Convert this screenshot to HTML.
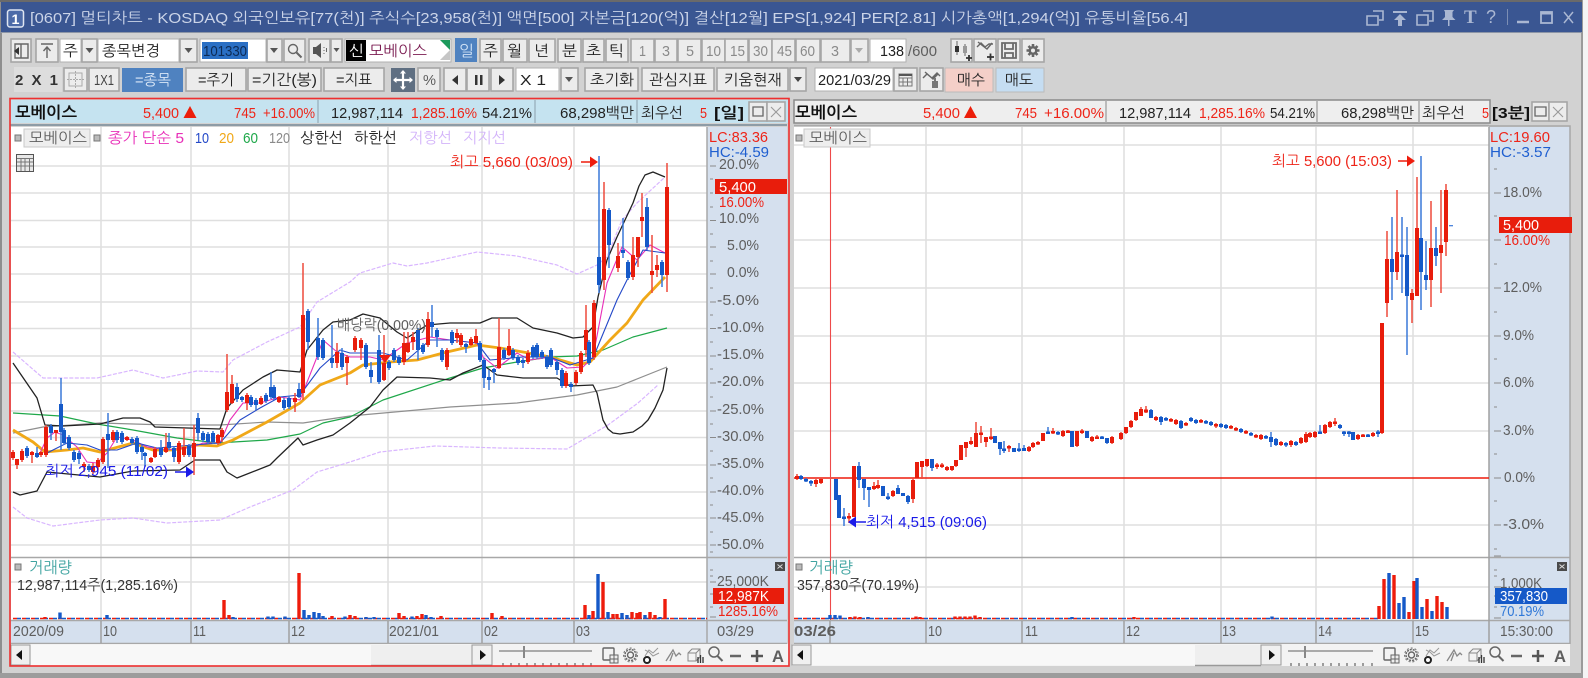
<!DOCTYPE html>
<html lang="ko"><head><meta charset="utf-8"><title>멀티차트</title>
<style>
html,body{margin:0;padding:0;width:1588px;height:678px;overflow:hidden;background:#fff}
svg{display:block;filter:blur(.35px)}
text{font-family:"Liberation Sans","NanumGothic","Noto Sans CJK KR",sans-serif;font-size:15px;fill:#222}
.h{font-weight:700}
.r{fill:#ee2418}.u{fill:#1f5fd0}.g{fill:#5e5e5e}.w{fill:#fff}.q{fill:#8a8a8a}
.b{fill:#ececec;stroke:#a6a6a6;stroke-width:1.6}
.wb{fill:#fff;stroke:#b0b0b0;stroke-width:1}
.gr{stroke:#dfdfdf;stroke-width:1.6;fill:none}
.ln{fill:none;stroke-linejoin:round}
.rw{stroke:#ee4a3c;stroke-width:1.5;fill:none}
.rb{stroke:#e81d0c;stroke-width:4;fill:none}
.bw{stroke:#3a78d8;stroke-width:1.5;fill:none}
.bb{stroke:#1559c8;stroke-width:4;fill:none}
.vr{stroke:#ee1c0c;stroke-width:3.4;fill:none}
.vb{stroke:#1559c8;stroke-width:3.4;fill:none}
.ic{fill:none;stroke:#666;stroke-width:1.4}
.ti{fill:none;stroke:#aab7d2;stroke-width:1.6}
</style></head><body>
<svg width="1588" height="678" viewBox="0 0 1588 678" xmlns="http://www.w3.org/2000/svg">
<rect width="1588" height="678" fill="#d2d2d2"/>
<rect x="1582" y="0" width="6" height="678" fill="#f4f4f4"/>
<rect x="1581" y="0" width="2" height="673" fill="#9a9a9a"/>
<rect x="0" y="0" width="2" height="678" fill="#8e8e8e"/>
<rect x="0" y="673" width="1583" height="5" fill="#9c9c9c"/>
<!-- title -->
<rect x="0" y="0" width="1582" height="2" fill="#6a6a6a"/>
<rect x="1" y="2" width="1581" height="30" fill="#3a5692"/>
<rect x="0" y="32" width="1582" height="1" fill="#8c95a6"/>
<rect x="7.5" y="10" width="16" height="17" rx="2.5" fill="#4d6ba8" stroke="#dfe6f2" stroke-width="1.5"/>
<text x="11.5" y="24" class="h w" textLength="8" lengthAdjust="spacingAndGlyphs" style="font-size:14px">1</text>
<text x="30" y="23" style="fill:#cbd4e8" textLength="1158" lengthAdjust="spacingAndGlyphs">[0607] 멀티차트 - KOSDAQ 외국인보유[77(천)] 주식수[23,958(천)] 액면[500] 자본금[120(억)] 결산[12월] EPS[1,924] PER[2.81] 시가총액[1,294(억)] 유통비율[56.4]</text>
<path class="ti" d="M1373 11h10v9h-4M1367 16h11v9h-11z"/>
<path d="M1393 11h14v2h-14zM1400 14l6 6h-4v6h-4v-6h-4z" fill="#aab7d2"/>
<path class="ti" d="M1423 11h10v10h-4M1417 15h11v10h-11z"/>
<path d="M1444 10h10l-1.500 2v5l3 3h-6v6h-1.500v-6h-6l3-3v-5z" fill="#aab7d2"/>
<text x="1464" y="23" style="fill:#aab7d2;font-family:'Liberation Serif';font-size:19px;font-weight:700">T</text>
<text x="1486" y="23" style="fill:#aab7d2;font-size:18px">?</text>
<path d="M1507.500 9v16" stroke="#7c8eb4" stroke-width="1"/>
<path d="M1517 22h12" stroke="#aab7d2" stroke-width="2.500"/>
<rect x="1541" y="12" width="11" height="11" fill="none" stroke="#aab7d2" stroke-width="1.800"/><path d="M1541 13h11" stroke="#aab7d2" stroke-width="3"/>
<path d="M1564 12l9 11M1573 12l-9 11" stroke="#aab7d2" stroke-width="1.500"/>

<!-- toolbar row1 -->
<rect class="b" x="11" y="39" width="20" height="23"/>
<path class="ic" d="M15 44h13v14h-13zM21 44v14" stroke="#444"/><path d="M14 51l5-4v8z" fill="#333"/>
<rect class="b" x="36" y="39" width="22" height="23"/>
<path class="ic" d="M41 44h12M47 47v11M43.500 51l3.500-4 3.500 4"/>
<rect class="wb" x="60" y="39" width="21" height="23"/><text x="63" y="56" textLength="15" lengthAdjust="spacingAndGlyphs">주</text>
<rect class="b" x="82" y="39" width="15" height="23"/><path d="M85.500 48h8l-4 5z" fill="#555"/>
<rect class="wb" x="98" y="39" width="81" height="23"/><text x="102" y="56" textLength="58" lengthAdjust="spacingAndGlyphs">종목변경</text>
<rect class="b" x="180" y="39" width="17" height="23"/><path d="M184.500 48h8l-4 5z" fill="#555"/>
<rect class="wb" x="200" y="39" width="66" height="23"/><rect x="202" y="42" width="46" height="17" fill="#2a6fc4"/>
<text x="203" y="56" class="w" textLength="44" lengthAdjust="spacingAndGlyphs" style="fill:#0d2b55">101330</text>
<rect class="b" x="267" y="39" width="15" height="23"/><path d="M270 48h8l-4 5z" fill="#555"/>
<rect class="b" x="284" y="39" width="21" height="23"/><circle cx="293" cy="49" r="4.500" class="ic" stroke-width="1.500"/><path d="M296.500 52.500l5 5" stroke="#666" stroke-width="2"/>
<rect class="b" x="309" y="39" width="21" height="23"/><path d="M313 47h3l5-4v15l-5-4h-3z" fill="#555"/><path d="M324 47v1M324 50v1M324 53v1M326.500 48v4" stroke="#666"/>
<rect class="b" x="331" y="39" width="11" height="23"/><path d="M333.500 48h6l-3 4z" fill="#555"/>
<rect class="wb" x="345" y="39" width="106" height="23"/>
<rect x="346" y="40" width="20" height="21" fill="#000"/><text x="349" y="56" class="w" textLength="15" lengthAdjust="spacingAndGlyphs">신</text>
<text x="369" y="56" style="fill:#7a1a50" textLength="58" lengthAdjust="spacingAndGlyphs">모베이스</text>
<path d="M440 40h10v10z" fill="#1d9a5c"/><path d="M450 50v10h-10z" fill="#c6c6c6"/>
<rect x="455" y="38" width="22" height="24" fill="#4f82c0"/><text x="459" y="56" style="fill:#cfe1f5" textLength="15" lengthAdjust="spacingAndGlyphs">일</text>
<g>
<rect class="b" x="480" y="39" width="21" height="23"/><text x="483" y="56" textLength="15" lengthAdjust="spacingAndGlyphs">주</text>
<rect class="b" x="503" y="39" width="24" height="23"/><text x="507" y="56" textLength="15" lengthAdjust="spacingAndGlyphs">월</text>
<rect class="b" x="529" y="39" width="26" height="23"/><text x="534" y="56" textLength="15" lengthAdjust="spacingAndGlyphs">년</text>
<rect class="b" x="558" y="39" width="23" height="23"/><text x="562" y="56" textLength="15" lengthAdjust="spacingAndGlyphs">분</text>
<rect class="b" x="583" y="39" width="21" height="23"/><text x="586" y="56" textLength="15" lengthAdjust="spacingAndGlyphs">초</text>
<rect class="b" x="606" y="39" width="22" height="23"/><text x="609" y="56" textLength="15" lengthAdjust="spacingAndGlyphs">틱</text>
<rect class="b" x="631" y="39" width="23" height="23"/><text x="639" y="56" class="q" textLength="7" lengthAdjust="spacingAndGlyphs">1</text>
<rect class="b" x="655" y="39" width="22" height="23"/><text x="662" y="56" class="q" textLength="8" lengthAdjust="spacingAndGlyphs">3</text>
<rect class="b" x="678" y="39" width="23" height="23"/><text x="686" y="56" class="q" textLength="8" lengthAdjust="spacingAndGlyphs">5</text>
<rect class="b" x="702" y="39" width="23" height="23"/><text x="706" y="56" class="q" textLength="15" lengthAdjust="spacingAndGlyphs">10</text>
<rect class="b" x="725" y="39" width="23" height="23"/><text x="730" y="56" class="q" textLength="15" lengthAdjust="spacingAndGlyphs">15</text>
<rect class="b" x="749" y="39" width="23" height="23"/><text x="753" y="56" class="q" textLength="15" lengthAdjust="spacingAndGlyphs">30</text>
<rect class="b" x="772" y="39" width="23" height="23"/><text x="777" y="56" class="q" textLength="15" lengthAdjust="spacingAndGlyphs">45</text>
<rect class="b" x="796" y="39" width="24" height="23"/><text x="800" y="56" class="q" textLength="15" lengthAdjust="spacingAndGlyphs">60</text>
<rect class="b" x="821" y="39" width="29" height="23"/><text x="831" y="56" class="q" textLength="8" lengthAdjust="spacingAndGlyphs">3</text>
<rect class="b" x="851" y="39" width="17" height="23"/><path d="M855 48h8l-4 5z" fill="#aaa"/>
<rect class="wb" x="870" y="39" width="36" height="23"/><text x="880" y="56" textLength="24" lengthAdjust="spacingAndGlyphs">138</text>
<text x="908" y="56" class="g" textLength="29" lengthAdjust="spacingAndGlyphs">/600</text>
</g>
<rect class="b" x="951" y="39" width="21" height="23"/><path d="M957 41v14M965 44v12" stroke="#666" stroke-width="1"/><path d="M955 46h4v6h-4z" fill="#333"/><path d="M963 46h4v7h-4z" fill="#999"/><path d="M966 58h6M969 55v6" stroke="#333" stroke-width="1.800"/>
<rect class="b" x="974" y="39" width="22" height="23"/><path d="M977 47l4-4 4 4 4-3 4 0M978 42l5 4 4 3 5-6" class="ic" stroke-width="1"/><path d="M987 57h7M990.500 53.500v7" stroke="#333" stroke-width="1.800"/>
<rect class="b" x="998" y="39" width="22" height="23"/><path d="M1002 43h14v15h-14zM1005 43v6h8v-6M1005 58v-5h8v5" fill="none" stroke="#6a6a6a" stroke-width="1.800"/>
<rect class="b" x="1022" y="39" width="22" height="23"/><circle cx="1033" cy="50.500" r="4.500" fill="#666"/><path d="M1033 44v13M1026.500 50.500h13M1028.500 46l9 9M1037.500 46l-9 9" stroke="#666" stroke-width="2.600"/><circle cx="1033" cy="50.500" r="2" fill="#ececec"/>

<!-- toolbar row2 -->
<rect x="14" y="67" width="48" height="25" fill="#dddddd"/>
<text x="15" y="85" class="h" style="fill:#333" textLength="43">2 X 1</text>
<rect class="b" x="64" y="68" width="23" height="23"/><rect x="69" y="73" width="13" height="13" fill="none" stroke="#aaa"/><path d="M75.500 71v18M67 79.500h17" stroke="#aaa" stroke-dasharray="2 1"/>
<rect class="b" x="89" y="68" width="30" height="23"/><text x="94" y="85" class="g" style="fill:#444" textLength="20" lengthAdjust="spacingAndGlyphs">1X1</text>
<rect x="122" y="68" width="61" height="24" fill="#4f82c0"/><text x="135" y="85" style="fill:#d9e7f7" textLength="36" lengthAdjust="spacingAndGlyphs">=종목</text>
<rect class="b" x="186" y="68" width="60" height="23"/><text x="198" y="85" textLength="36" lengthAdjust="spacingAndGlyphs">=주기</text>
<rect class="b" x="248" y="68" width="73" height="23"/><text x="252" y="85" textLength="65" lengthAdjust="spacingAndGlyphs">=기간(봉)</text>
<rect class="b" x="324" y="68" width="60" height="23"/><text x="336" y="85" textLength="36" lengthAdjust="spacingAndGlyphs">=지표</text>
<rect x="391" y="68" width="24" height="24" fill="#5f6f82"/><path d="M403 71v18M394 80h18" stroke="#fff" stroke-width="2.200"/><path d="M403 70l3 3.500h-6zM403 90l3-3.500h-6zM393 80l3.500-3v6zM413 80l-3.500-3v6z" fill="#fff"/>
<rect class="b" x="418" y="68" width="22" height="23"/><text x="423" y="85" class="g" textLength="13" lengthAdjust="spacingAndGlyphs">%</text>
<rect class="b" x="444" y="68" width="22" height="23"/><path d="M458 75v10l-6-5z" fill="#333"/>
<rect class="b" x="467" y="68" width="22" height="23"/><path d="M475 75h2.500v10h-2.500zM480 75h2.500v10h-2.500z" fill="#333"/>
<rect class="b" x="491" y="68" width="22" height="23"/><path d="M499 75v10l6-5z" fill="#333"/>
<rect class="wb" x="516" y="68" width="43" height="23"/><text x="520" y="85" textLength="26" lengthAdjust="spacingAndGlyphs">X 1</text>
<rect class="b" x="561" y="68" width="17" height="23"/><path d="M565 77h8l-4 5z" fill="#555"/>
<rect class="b" x="585" y="68" width="53" height="23"/><text x="590" y="85" textLength="44" lengthAdjust="spacingAndGlyphs">초기화</text>
<rect class="b" x="642" y="68" width="72" height="23"/><text x="649" y="85" textLength="58" lengthAdjust="spacingAndGlyphs">관심지표</text>
<rect class="b" x="717" y="68" width="71" height="23"/><text x="724" y="85" textLength="58" lengthAdjust="spacingAndGlyphs">키움현재</text>
<rect class="b" x="790" y="68" width="16" height="23"/><path d="M794 77h8l-4 5z" fill="#444"/>
<rect class="wb" x="815" y="68" width="78" height="23"/><text x="818" y="85" textLength="73" lengthAdjust="spacingAndGlyphs">2021/03/29</text>
<rect class="b" x="894" y="68" width="23" height="23"/><path d="M899 74h13v12h-13zM899 78h13M903 78v8M907.500 78v8M899 82h13" fill="none" stroke="#777"/><path d="M899 75h13" stroke="#555" stroke-width="2"/>
<rect class="b" x="920" y="68" width="23" height="23"/><path d="M923 78l4-4 5 4 5-5 3 3M925 72l8 7 5-5" class="ic" stroke-width="1"/><path d="M932 81h6v7h-6zM934 81v-3h2v3" fill="#777"/>
<rect x="945" y="68" width="48" height="24" fill="#f4cfc8" stroke="#bbb"/><text x="957" y="85" textLength="28" lengthAdjust="spacingAndGlyphs">매수</text>
<rect x="996" y="68" width="48" height="24" fill="#c5ddf2" stroke="#bbb"/><text x="1005" y="85" textLength="28" lengthAdjust="spacingAndGlyphs">매도</text>

<!-- LEFT PANEL -->
<rect x="11" y="100" width="777" height="23" fill="#c5e3f0"/>
<rect x="10" y="124" width="777" height="2" fill="#8e9ca6"/>
<rect x="11" y="127" width="696" height="494" fill="#fff"/>
<rect x="707" y="127" width="80" height="517" fill="#d5e0ee"/>
<rect x="11" y="621" width="696" height="22" fill="#d5e0ee"/>
<path d="M318 100v23M535 100v23M637 100v23" stroke="#9fb6c2" stroke-width="1.500"/>
<text x="15" y="118" class="h" style="fill:#111;font-size:16px" textLength="62" lengthAdjust="spacingAndGlyphs">모베이스</text>
<text x="143" y="118" class="r" textLength="36" lengthAdjust="spacingAndGlyphs">5,400</text>
<path d="M190 106l6.500 12h-13z" fill="#ec1e0a"/>
<text x="234" y="118" class="r" textLength="22" lengthAdjust="spacingAndGlyphs">745</text>
<text x="263" y="118" class="r" textLength="52" lengthAdjust="spacingAndGlyphs">+16.00%</text>
<text x="331" y="118" textLength="72" lengthAdjust="spacingAndGlyphs">12,987,114</text>
<text x="411" y="118" class="r" textLength="66" lengthAdjust="spacingAndGlyphs">1,285.16%</text>
<text x="482" y="118" textLength="50" lengthAdjust="spacingAndGlyphs">54.21%</text>
<text x="560" y="118" textLength="74" lengthAdjust="spacingAndGlyphs">68,298백만</text>
<text x="641" y="118" textLength="42" lengthAdjust="spacingAndGlyphs">최우선</text>
<text x="700" y="118" class="r" textLength="7" lengthAdjust="spacingAndGlyphs">5</text>
<text x="714" y="118" class="h" style="fill:#111" textLength="30" lengthAdjust="spacingAndGlyphs">[일]</text>
<rect class="b" x="749" y="102" width="18" height="19"/><path d="M753 107h10v9h-10z" fill="none" stroke="#666" stroke-width="1.300"/>
<rect class="b" x="767" y="102" width="18" height="19"/><path d="M771 107l10 10M781 107l-10 10" stroke="#999" stroke-width="1.100"/>

<!-- left grid -->
<path class="gr" d="M101 127V620M191 127V620M289 127V620M388 127V620M482 127V620M574 127V620"/>
<path class="gr" d="M11 166H707M11 193H707M11 220.500H707M11 247H707M11 274H707M11 302H707M11 328.500H707M11 356H707M11 383H707M11 411H707M11 437.500H707M11 465H707M11 492H707M11 518H707M11 545H707M11 582H707"/>
<path d="M11 557.500H787M11 620.500H787M11 643.500H787M707 127V643" stroke="#a8a8a8" stroke-width="1.500" fill="none"/>
<path d="M101 621V643M191 621V643M289 621V643M388 621V643M482 621V643M574 621V643" stroke="#a0a0a0" stroke-width="1.500"/>

<!-- left lines -->
<polyline class="ln" stroke="#d9b6ff" stroke-width="1.200" stroke-dasharray="4 1.500" points="13,352 43,378 60,378 97,378 133,370 163,378 197,371 223,372 233,360 267,342 300,327 317,302 350,282 360,273 393,263 407,266 427,263 477,252 517,256 557,265 577,274 597,265 607,257 622,220 637,203 665,177"/>
<polyline class="ln" stroke="#d9b6ff" stroke-width="1.200" stroke-dasharray="4 1.500" points="13,507 27,518 53,526 100,520 133,518 167,523 220,520 250,507 293,490 317,472 350,462 380,452 435,446 500,448 567,449 608,425 638,403 658,385"/>
<polyline class="ln" stroke="#8f8f8f" stroke-width="1.200" points="13,433 43,427 100,423 167,425 220,425 267,422 303,423 350,416 450,407 517,403 577,395 617,387 667,367"/>
<polyline class="ln" stroke="#1fa84a" stroke-width="1.200" points="13,413 60,416 97,424 133,430 177,438 217,443 267,440 300,434 323,423 350,417 383,400 450,378 483,368 517,362 550,357 577,356 603,350 633,337 667,328"/>
<polyline class="ln" stroke="#222" stroke-width="1.300" points="13,363 37,398 45,425 63,426 100,424 123,418 140,418 150,422 155,427 220,429 227,408 243,390 263,377 277,370 300,372 307,350 323,330 333,322 350,320 363,314 380,318 397,332 407,338 427,325 450,323 480,323 492,318 517,318 533,328 557,333 573,338 583,337 593,327 598,297 607,260 617,237 633,203 639,186 645,175 653,172 665,177"/>
<polyline class="ln" stroke="#222" stroke-width="1.300" points="13,492 20,495 37,491 47,472 100,477 133,471 180,470 195,460 220,460 227,472 237,478 270,465 277,458 298,438 303,445 317,440 333,435 350,423 370,407 383,390 397,377 430,378 450,380 463,373 483,365 497,375 523,378 557,378 570,386 593,385 597,393 603,420 608,429 613,433 620,434 633,432 642,426 648,420 655,408 663,390 667,368"/>
<polyline class="ln" stroke="#f0a818" stroke-width="2.800" points="13,430 33,442 45,452 67,450 83,448 100,452 133,443 153,450 173,450 197,445 217,446 233,440 267,422 300,403 320,385 350,373 363,365 390,362 417,360 447,352 477,345 500,348 523,352 550,357 577,365 590,362 610,340 627,323 643,300 665,277"/>
<polyline class="ln" stroke="#e82fb8" stroke-width="1.100" points="40,453 47,438 55,432 63,435 77,447 87,462 97,463 107,453 117,437 133,440 147,447 167,450 193,447 203,443 220,443 230,420 243,403 260,403 280,397 300,400 317,357 323,340 337,352 350,357 370,357 383,360 407,343 430,337 450,340 477,343 483,357 497,368 517,353 530,360 550,357 567,368 583,367 593,357 607,283 622,247 637,260 650,245 665,253"/>
<polyline class="ln" stroke="#2348c8" stroke-width="1.100" points="47,453 67,443 87,445 100,450 117,450 137,443 157,448 193,445 220,443 240,420 260,408 280,397 300,395 320,368 340,350 350,353 367,353 383,353 407,360 430,340 450,340 477,343 490,360 523,357 550,357 570,365 593,358 617,300 627,280 643,250 665,253"/>

<!-- left candles -->
<path class="rw" d="M13 450V460M17 459V469M22 449V462M32 451V463M41 451V457M46 425V457M56 430V441M84 462V472M93 463V474M98 458V470M103 437V464M113 430V442M127 436V441M151 457V463M155 447V458M166 433V453M179 441V464M184 428V457M194 425V475M218 434V445M222 428V442M227 354V412M232 375V404M247 393V410M261 396V405M279 396V403M295 393V412M303 263V400M337 343V368M347 355V385M355 336V352M361 338V360M384 335V381M404 332V365M408 332V353M413 332V350M428 312V347M447 348V370M457 329V343M461 333V347M471 337V346M476 329V344M499 318V369M509 329V356M528 350V364M566 371V388M576 370V385M581 351V374M586 305V357M594 300V360M604 182V290M618 243V272M633 237V280M638 237V267M642 193V237M652 235V293M657 255V277M667 163V292"/>
<path class="rb" d="M13 452V458M17 459V465M22 451V460M32 452V455M41 452V455M46 427V455M56 430V433M84 464V467M93 466V472M98 460V467M103 439V462M113 432V440M127 437V440M151 458V462M155 449V457M166 447V452M179 443V462M184 447V455M194 443V457M218 435V443M222 430V437M227 392V410M232 384V403M247 395V403M261 398V404M279 397V402M295 398V402M303 315V393M337 352V363M347 357V363M355 338V350M361 340V348M384 363V380M404 343V362M408 343V352M413 337V342M428 319V345M447 350V367M457 333V338M461 335V345M471 339V345M476 336V343M499 347V368M509 346V355M528 353V362M566 373V386M576 372V383M581 353V372M586 330V350M594 303V357M604 209V280M618 256V268M633 255V277M638 237V257M642 217V221M652 271V275M657 265V270M667 187V275"/>
<path class="bw" d="M27 446V458M37 447V458M51 424V440M61 378V450M64 428V445M69 435V450M74 450V462M79 451V464M89 464V472M108 413V468M117 430V443M122 431V444M132 437V445M137 436V454M142 445V460M145 452V467M161 440V457M169 433V450M174 446V462M189 444V457M198 413V440M203 431V442M208 432V444M213 431V444M237 383V402M242 396V402M251 395V407M256 398V410M266 393V403M271 372V399M274 385V400M284 398V410M289 396V409M299 383V398M308 309V350M318 318V360M323 338V360M332 325V368M342 348V370M366 343V369M371 362V383M379 335V384M389 360V370M394 348V362M399 355V365M418 328V360M423 343V354M432 305V337M437 328V347M442 348V362M452 330V345M466 343V353M480 341V362M484 358V388M489 370V390M494 368V383M504 348V360M513 348V360M518 355V365M523 358V368M533 345V359M537 343V359M542 350V359M547 355V369M551 348V367M557 360V375M562 368V388M571 382V392M589 340V365M599 156V293M609 208V268M623 218V258M628 260V280M647 198V250M662 260V287"/>
<path class="bb" d="M27 448V456M37 453V457M51 426V433M61 404V432M64 430V443M69 437V448M74 452V460M79 453V459M89 466V470M108 434V440M117 432V440M122 433V442M132 439V443M137 438V452M142 447V452M145 453V456M161 448V455M169 442V448M174 448V457M189 446V455M198 418V433M203 433V440M208 434V442M213 433V442M237 387V399M242 397V400M251 397V405M256 400V405M266 395V401M271 387V397M274 387V398M284 400V408M289 398V407M299 389V397M308 311V342M318 338V357M323 340V358M332 358V363M342 353V367M366 345V367M371 370V377M379 350V382M389 362V368M394 350V360M399 357V363M418 330V350M423 345V352M432 322V327M437 330V337M442 350V360M452 332V343M466 344V347M480 343V360M484 360V378M489 377V380M494 369V372M504 350V358M513 350V358M518 357V363M523 360V363M533 347V357M537 345V357M542 352V357M547 357V367M551 350V365M557 362V370M562 370V386M571 384V387M589 342V363M599 257V285M609 210V245M623 250V253M628 262V278M647 207V247M662 262V275"/>
<path d="M379 355h12l-6 8z" fill="#ee1c0c"/>

<!-- left volume -->
<path d="M13 618.500H707" stroke="#ee1c0c" stroke-width="1.600" stroke-dasharray="4 5"/>
<path d="M17 618.500H707" stroke="#1559c8" stroke-width="1.600" stroke-dasharray="4 5"/>
<path class="vr" d="M45 619V617M224 619V600M229 619V615M299 619V573M332 619V616M350 619V615M355 619V616M399 619V613M404 619V616M417 619V616M422 619V614M441 619V616M492 619V613M502 619V616M585 619V605M593 619V611M603 619V582M613 619V614M617 619V614M632 619V612M637 619V613M640 619V612M650 619V612M655 619V615M665 619V599"/>
<path class="vb" d="M60 619V612.500M107 619V615M233 619V617M268 619V616.500M273 619V616.500M285 619V616.500M304 619V610M309 619V615M314 619V612M319 619V613M323 619V616M345 619V616.500M412 619V616.500M426 619V615M431 619V617M366 619V617M374 619V617M589 619V615M598 619V574M608 619V612M622 619V613M627 619V615M645 619V615M660 619V617"/>

<!-- left legend -->
<rect x="15" y="135" width="6" height="6" fill="#bbb" stroke="#777"/>
<rect x="24" y="129" width="66" height="18" fill="#eee" stroke="#c8c8c8"/>
<text x="29" y="143" class="g" textLength="58" lengthAdjust="spacingAndGlyphs">모베이스</text>
<rect x="94" y="135" width="6" height="6" fill="#bbb" stroke="#777"/>
<text x="108" y="143" style="fill:#e82fb8" textLength="76" lengthAdjust="spacingAndGlyphs">종가 단순 5</text>
<text x="195" y="143" style="fill:#2348c8" textLength="14" lengthAdjust="spacingAndGlyphs">10</text>
<text x="219" y="143" style="fill:#f0a818" textLength="15" lengthAdjust="spacingAndGlyphs">20</text>
<text x="243" y="143" style="fill:#1fa84a" textLength="15" lengthAdjust="spacingAndGlyphs">60</text>
<text x="269" y="143" class="q" textLength="21" lengthAdjust="spacingAndGlyphs">120</text>
<text x="300" y="143" textLength="43" lengthAdjust="spacingAndGlyphs">상한선</text>
<text x="354" y="143" textLength="43" lengthAdjust="spacingAndGlyphs">하한선</text>
<text x="409" y="143" style="fill:#d3b4fa" textLength="43" lengthAdjust="spacingAndGlyphs">저항선</text>
<text x="463" y="143" style="fill:#d3b4fa" textLength="43" lengthAdjust="spacingAndGlyphs">지지선</text>
<rect x="16.500" y="154.500" width="17" height="17" fill="#e8e8e8" stroke="#555"/><path d="M17 158.500h16M17 162h16M17 166h16M21 158v13M25 158v13M29.500 158v13" stroke="#777" stroke-width="1"/>
<text x="450" y="167" class="r" textLength="123" lengthAdjust="spacingAndGlyphs">최고 5,660 (03/09)</text>
<path d="M581 162h11" stroke="#ee1c0c" stroke-width="1.500"/><path d="M590 156.500l8 5.500-8 5.500z" fill="#ee1c0c"/>
<text x="337" y="330" class="g" textLength="89" lengthAdjust="spacingAndGlyphs">배당락(0.00%)</text>
<text x="45" y="476" style="fill:#1a1ae8" textLength="123" lengthAdjust="spacingAndGlyphs">최저 2,945 (11/02)</text>
<path d="M175 472h11" stroke="#1a1ae8" stroke-width="1.500"/><path d="M186 466.500l8 5.500-8 5.500z" fill="#1a1ae8"/>

<!-- left axis -->
<path d="M710 166h6M710 193h3M710 220.500h6M710 247h6M710 274h6M710 302h6M710 328.500h6M710 356h6M710 383h6M710 411h6M710 437.500h6M710 465h6M710 492h6M710 518h6M710 545h6M710 552h3M710 179h3M710 207h3M710 234h3M710 261h3M710 288h3M710 315h3M710 342h3M710 369h3M710 397h3M710 424h3M710 451h3M710 478h3M710 505h3M710 532h3M710 570h3M710 576h3M710 582h6M710 594h3M710 607h3M710 617h6" stroke="#8a8a8a" stroke-width="1"/>
<g class="g">
<text class="g" x="719" y="169" textLength="40" lengthAdjust="spacingAndGlyphs">20.0%</text>
<text class="g" x="719" y="223" textLength="40" lengthAdjust="spacingAndGlyphs">10.0%</text>
<text class="g" x="727" y="250" textLength="32" lengthAdjust="spacingAndGlyphs">5.0%</text>
<text class="g" x="727" y="277" textLength="32" lengthAdjust="spacingAndGlyphs">0.0%</text>
<text class="g" x="717" y="305" textLength="42" lengthAdjust="spacingAndGlyphs">-5.0%</text>
<text class="g" x="717" y="332" textLength="47" lengthAdjust="spacingAndGlyphs">-10.0%</text>
<text class="g" x="717" y="359" textLength="47" lengthAdjust="spacingAndGlyphs">-15.0%</text>
<text class="g" x="717" y="386" textLength="47" lengthAdjust="spacingAndGlyphs">-20.0%</text>
<text class="g" x="717" y="414" textLength="47" lengthAdjust="spacingAndGlyphs">-25.0%</text>
<text class="g" x="717" y="441" textLength="47" lengthAdjust="spacingAndGlyphs">-30.0%</text>
<text class="g" x="717" y="468" textLength="47" lengthAdjust="spacingAndGlyphs">-35.0%</text>
<text class="g" x="717" y="495" textLength="47" lengthAdjust="spacingAndGlyphs">-40.0%</text>
<text class="g" x="717" y="522" textLength="47" lengthAdjust="spacingAndGlyphs">-45.0%</text>
<text class="g" x="717" y="549" textLength="47" lengthAdjust="spacingAndGlyphs">-50.0%</text>
</g>
<rect x="709" y="127" width="62" height="30" fill="#d5e0ee"/>
<text x="709" y="142" class="r" textLength="59" lengthAdjust="spacingAndGlyphs">LC:83.36</text>
<text x="709" y="157" class="u" textLength="60" lengthAdjust="spacingAndGlyphs">HC:-4.59</text>
<rect x="715" y="179" width="72" height="15" fill="#e81d0c"/>
<text x="719" y="192" class="w" textLength="37" lengthAdjust="spacingAndGlyphs">5,400</text>
<text x="719" y="207" class="r" textLength="45" lengthAdjust="spacingAndGlyphs">16.00%</text>
<rect x="775" y="562" width="10" height="9" fill="#4a4a4a"/><path d="M777.500 564.500l5 4M782.500 564.500l-5 4" stroke="#ddd"/>
<text x="717" y="586" class="g" textLength="52" lengthAdjust="spacingAndGlyphs">25,000K</text>
<rect x="713" y="588" width="71" height="16" fill="#e81d0c"/>
<text x="718" y="601" class="w" textLength="51" lengthAdjust="spacingAndGlyphs">12,987K</text>
<text x="718" y="616" class="r" textLength="60" lengthAdjust="spacingAndGlyphs">1285.16%</text>
<text x="29" y="573" style="fill:#3ea3a0;font-size:16px" textLength="43" lengthAdjust="spacingAndGlyphs">거래량</text>
<rect x="15" y="564" width="6" height="6" fill="#bbb" stroke="#777"/>
<text x="17" y="590" style="fill:#333" textLength="161" lengthAdjust="spacingAndGlyphs">12,987,114주(1,285.16%)</text>
<g class="g">
<text class="g" x="13" y="636" textLength="51" lengthAdjust="spacingAndGlyphs">2020/09</text>
<text class="g" x="103" y="636" textLength="14" lengthAdjust="spacingAndGlyphs">10</text>
<text class="g" x="193" y="636" textLength="13" lengthAdjust="spacingAndGlyphs">11</text>
<text class="g" x="291" y="636" textLength="14" lengthAdjust="spacingAndGlyphs">12</text>
<text class="g" x="389" y="636" textLength="50" lengthAdjust="spacingAndGlyphs">2021/01</text>
<text class="g" x="484" y="636" textLength="14" lengthAdjust="spacingAndGlyphs">02</text>
<text class="g" x="576" y="636" textLength="14" lengthAdjust="spacingAndGlyphs">03</text>
<text class="g" x="717" y="636" textLength="37" lengthAdjust="spacingAndGlyphs">03/29</text>
</g>

<!-- left scrollbar -->
<rect x="11" y="644" width="777" height="22" fill="#f3f3f3"/>
<rect x="31" y="645" width="340" height="20" fill="#f8f8f8"/>
<rect x="371" y="645" width="101" height="20" fill="#efefef"/><path d="M371 665.500h101" stroke="#999" stroke-width="1.500"/>
<rect x="11" y="645" width="19" height="20" fill="#f0f0f0" stroke="#999"/><path d="M22 650v10l-6-5z" fill="#111"/>
<rect x="472" y="645" width="20" height="20" fill="#f0f0f0" stroke="#999"/><path d="M480 650v10l6-5z" fill="#111"/>
<path d="M499 651h93" stroke="#aaa" stroke-width="2"/><path d="M524 646v12" stroke="#888" stroke-width="2"/>
<path d="M503 663v3M511 663v3M519 663v3M527 663v3M535 663v3M543 663v3M551 663v3M559 663v3M567 663v3M575 663v3M583 663v3M591 663v3" stroke="#444" stroke-width="1"/>
<g>
<rect class="ic" x="603" y="648" width="11" height="12" rx="1"/><rect x="610" y="655" width="8" height="8" fill="#eee" stroke="#666"/><path d="M614 655v8M610 659h8" stroke="#666"/>
<circle cx="630.500" cy="655" r="5.500" fill="none" stroke="#666" stroke-width="1.500" stroke-dasharray="2 1"/><circle cx="630.500" cy="655" r="3" class="ic"/><circle cx="630.500" cy="655" r="7" fill="none" stroke="#777" stroke-dasharray="2 2"/>
<path d="M645 656l4-6 4 3 5-5M645 650l4 2 4 4 6-3" fill="none" stroke="#999"/><circle cx="647" cy="660" r="3" fill="#fff" stroke="#222" stroke-width="2"/>
<path d="M666 661l7-11 3 6 3-3 2 2M670 661l3-8" fill="none" stroke="#888" stroke-width="1.300"/>
<path d="M688 653l4-4h8v8l-4 4h-8zM688 653h8v8M696 653l4-4" fill="none" stroke="#888"/><path d="M698 657v6M700.500 655v8M703 657v6" stroke="#333" stroke-width="1.300"/>
<circle cx="714" cy="652" r="5" fill="none" stroke="#666" stroke-width="1.500"/><path d="M717.500 656l5 5" stroke="#666" stroke-width="2"/>
<path d="M730 656h11" stroke="#666" stroke-width="2.500"/>
<path d="M751 656h12M757 650v12" stroke="#555" stroke-width="2.500"/>
</g>
<text x="772" y="662" class="h g" style="font-size:17px" textLength="12" lengthAdjust="spacingAndGlyphs">A</text>
<rect x="10" y="98.500" width="779" height="567.500" fill="none" stroke="#ee3030" stroke-width="1.600"/>

<!-- RIGHT PANEL -->
<rect x="794" y="100" width="696" height="23" fill="#eeeeee" stroke="#8a8a8a" stroke-width="1.500"/>
<path d="M1106 100v23M1317 100v23M1419 100v23" stroke="#aaa" stroke-width="1.500"/>
<rect x="794" y="127" width="695" height="494" fill="#fff"/>
<path d="M794 125.500H1489" stroke="#aaa" stroke-width="1.500"/>
<rect x="1489" y="127" width="81" height="517" fill="#d5e0ee"/>
<rect x="794" y="621" width="695" height="22" fill="#d5e0ee"/>
<path d="M1489 126H1570V644" fill="none" stroke="#a8a8a8" stroke-width="1.500"/>
<text x="795" y="118" class="h" style="fill:#111;font-size:16px" textLength="62" lengthAdjust="spacingAndGlyphs">모베이스</text>
<text x="923" y="118" class="r" textLength="37" lengthAdjust="spacingAndGlyphs">5,400</text>
<path d="M970.500 106l6.500 12h-13z" fill="#ec1e0a"/>
<text x="1015" y="118" class="r" textLength="22" lengthAdjust="spacingAndGlyphs">745</text>
<text x="1044" y="118" class="r" textLength="60" lengthAdjust="spacingAndGlyphs">+16.00%</text>
<text x="1119" y="118" textLength="72" lengthAdjust="spacingAndGlyphs">12,987,114</text>
<text x="1199" y="118" class="r" textLength="66" lengthAdjust="spacingAndGlyphs">1,285.16%</text>
<text x="1270" y="118" textLength="45" lengthAdjust="spacingAndGlyphs">54.21%</text>
<text x="1341" y="118" textLength="73" lengthAdjust="spacingAndGlyphs">68,298백만</text>
<text x="1422" y="118" textLength="43" lengthAdjust="spacingAndGlyphs">최우선</text>
<text x="1482" y="118" class="r" textLength="7" lengthAdjust="spacingAndGlyphs">5</text>
<text x="1492" y="118" class="h" style="fill:#111" textLength="38" lengthAdjust="spacingAndGlyphs">[3분]</text>
<rect class="b" x="1532" y="102" width="17" height="19"/><path d="M1535 107h11v9h-11z" fill="none" stroke="#666" stroke-width="1.300"/>
<rect class="b" x="1549" y="102" width="18" height="19"/><path d="M1553 107l10 10M1563 107l-10 10" stroke="#999" stroke-width="1.100"/>

<path class="gr" d="M926 127V620M1022 127V620M1124 127V620M1221 127V620M1316 127V620M1413 127V620"/>
<path class="gr" d="M794 145H1489M794 193H1489M794 240H1489M794 288H1489M794 336H1489M794 383H1489M794 431H1489M794 525H1489M794 587H1489"/>
<path d="M794 557.500H1570M794 620.500H1570M794 643.500H1570" stroke="#a8a8a8" stroke-width="1.500" fill="none"/>
<path d="M1489 127V643M926 621V643M1022 621V643M1124 621V643M1221 621V643M1316 621V643M1413 621V643M830 621V643" stroke="#a0a0a0" stroke-width="1.500" fill="none"/>
<path d="M794 478H1489" stroke="#ee1c0c" stroke-width="1.400"/>
<path d="M830.500 127V620" stroke="#ee4a4a" stroke-width="1.100"/>

<!-- right candles -->
<path class="rw" d="M797 474V480M816 479V487M821 478V484M849 513V523M854 466V517M874 482V490M878 480V489M893 490V497M913 478V503M917 462V478M922 461V479M927 459V467M937 463V469M942 463V468M947 466V471M952 466V471M956 460V467M961 445V460M966 442V457M971 437V445M976 422V447M981 426V443M986 437V447M991 428V440M1009 445V452M1029 446V452M1033 442V448M1038 441V445M1043 433V441M1053 428V434M1063 430V437M1068 430V433M1077 431V447M1082 429V434M1092 436V442M1097 435V439M1112 436V444M1121 432V440M1126 427V434M1131 420V428M1136 412V421M1141 407V416M1146 406V413M1156 416V421M1171 418V422M1176 419V425M1186 422V426M1201 419V423M1216 423V428M1231 425V429M1236 427V431M1246 430V434M1256 434V438M1261 434V440M1281 441V446M1291 440V447M1301 437V444M1306 432V443M1310 432V438M1315 431V438M1325 424V434M1330 421V428M1335 418V426M1358 434V440M1363 434V437M1373 432V437M1382 323V434M1387 231V317M1397 190V280M1412 289V323M1417 177V296M1431 201V307M1441 190V293M1446 184V256"/>
<path class="rb" d="M797 476V479M816 480V484M821 479V483M849 516V518.500M854 466V517M874 486V489M878 485V488M893 491V496M913 480V499M917 462V478M922 461V467M927 459V466M937 464.500V467M942 464.500V467M947 467V470M952 466V470M956 460V466M961 445V460M966 442V448M971 441V444M976 433V447M981 432.500V435M986 437V442M991 436.500V439M1009 446V448.500M1029 447V451M1033 443V447M1038 442V444.500M1043 433V441M1053 431V433.500M1063 431V436M1068 430.500V433M1077 431V446M1082 430.500V433M1092 437V441M1097 436.500V439M1112 437V443M1121 433V439M1126 427V433M1131 421V427M1136 412V420M1141 409V416M1146 409.500V412.500M1156 417V420M1171 419V421.500M1176 420V424M1186 423V425.500M1201 420V422.500M1216 424V426.500M1231 426V428.500M1236 428V430.500M1246 431V433.500M1256 435V437.500M1261 435V439M1281 442V445M1291 441V445M1301 438V443M1306 434V442M1310 433V437M1315 432V437M1325 425V433M1330 422V427M1335 421.500V424M1358 435V439M1363 434.500V437M1373 433V436M1382 323V433M1387 259V303M1397 252V272M1412 293V300M1417 228V296M1431 248V280M1441 245V253M1446 190V242"/>
<path class="bw" d="M801 475V480M806 478V482M811 480V486M836 479V500M839 495V518M844 508V526M859 462V488M864 479V500M869 487V507M883 486V496M888 493V500M898 485V494M903 493V496M908 495V504M932 459V471M995 436V443M1000 442V455M1004 441V453M1014 448V452M1019 443V452M1024 445V451M1048 427V434M1058 431V435M1072 431V447M1087 431V438M1102 436V439M1107 438V444M1151 409V418M1161 416V425M1166 417V421M1181 420V429M1191 417V422M1196 419V424M1206 420V424M1211 421V426M1221 423V428M1226 424V429M1241 428V433M1251 432V436M1266 435V439M1271 432V447M1276 438V446M1286 442V447M1296 441V446M1320 425V434M1340 424V429M1344 431V436M1349 431V437M1353 432V440M1368 434V437M1378 430V437M1392 217V300M1402 217V293M1407 227V355M1421 156V310M1426 241V290M1436 227V266"/>
<path class="bb" d="M801 476V479M806 479V481.500M811 481V483.500M836 479V500M839 495V518M844 516.500V519M859 466V480M864 479V488M869 487V490M883 486V496M888 496.500V499M898 488V494M903 493V496M908 496V502M932 459V468M995 436V443M1000 442V449M1004 448.500V451M1014 448V452M1019 448.500V451M1024 448V451M1048 431.500V434M1058 432V434.500M1072 431V447M1087 431V438M1102 436.500V439M1107 438V443M1151 410V418M1161 417V422M1166 418V420.500M1181 421V428M1191 418V421M1196 420V423M1206 421V423.500M1211 422V425M1221 424V427M1226 425V428M1241 429V432M1251 433V435.500M1266 436V438.500M1271 437V442M1276 439V445M1286 443V445.500M1296 442V445M1320 431.500V434M1340 425V428M1344 431.500V434M1349 431.500V434M1353 432V440M1368 434.500V437M1378 431.500V434M1392 259V272M1402 254.500V257M1407 255V296M1421 238V272M1426 275V280M1436 248V256"/>
<path d="M1449 225.700h4" stroke="#3a78d8" stroke-width="1.200"/>

<!-- right volume -->
<path d="M794 618.500H1378" stroke="#ee1c0c" stroke-width="1.600" stroke-dasharray="4 5"/>
<path d="M798 618.500H1378" stroke="#1559c8" stroke-width="1.600" stroke-dasharray="4 5"/>
<path class="vr" d="M850 619V617M855 619V616.500M860 619V617M916 619V616.500M920 619V617M955 619V616.500M960 619V616.500M965 619V616.500M970 619V616.500M975 619V615.500M980 619V617M1134 619V617M1379 619V606M1384 619V579M1394 619V575M1409 619V612M1414 619V581M1427 619V599M1437 619V596M1442 619V602"/>
<path class="vb" d="M830 619V615M835 619V615M840 619V615.500M868 619V617M1072 619V617M1272 619V616.500M1389 619V573M1399 619V603M1404 619V597M1417 619V578M1422 619V607M1432 619V611M1447 619V607"/>

<!-- right legend -->
<rect x="796" y="135" width="6" height="6" fill="#bbb" stroke="#777"/>
<rect x="804" y="129" width="66" height="18" fill="#eee" stroke="#c8c8c8"/>
<text x="809" y="143" class="g" textLength="58" lengthAdjust="spacingAndGlyphs">모베이스</text>
<text x="1272" y="166" class="r" textLength="120" lengthAdjust="spacingAndGlyphs">최고 5,600 (15:03)</text>
<path d="M1398 161h11" stroke="#ee1c0c" stroke-width="1.500"/><path d="M1407 155.500l8 5.500-8 5.500z" fill="#ee1c0c"/>
<text x="866" y="527" style="fill:#1a1ae8" textLength="121" lengthAdjust="spacingAndGlyphs">최저 4,515 (09:06)</text>
<path d="M855 522h11" stroke="#1a1ae8" stroke-width="1.500"/><path d="M856 516.500l-8 5.500 8 5.500z" fill="#1a1ae8"/>
<rect x="796" y="564" width="6" height="6" fill="#bbb" stroke="#777"/>
<text x="809" y="573" style="fill:#3ea3a0;font-size:16px" textLength="44" lengthAdjust="spacingAndGlyphs">거래량</text>
<text x="797" y="590" style="fill:#333" textLength="122" lengthAdjust="spacingAndGlyphs">357,830주(70.19%)</text>

<!-- right axis -->
<path d="M1494 193h7M1494 240h7M1494 288h7M1494 336h7M1494 383h7M1494 431h7M1494 478h7M1494 525h7M1494 169h3M1494 216h3M1494 264h3M1494 312h3M1494 359h3M1494 407h3M1494 454h3M1494 501h3M1494 549h3M1494 556h7M1494 570h3M1494 576h3M1494 587h7M1494 596h3M1494 607h3M1494 618h7" stroke="#8a8a8a"/>
<text x="1490" y="142" class="r" textLength="60" lengthAdjust="spacingAndGlyphs">LC:19.60</text>
<text x="1490" y="157" class="u" textLength="61" lengthAdjust="spacingAndGlyphs">HC:-3.57</text>
<text class="g" x="1503" y="197" textLength="39" lengthAdjust="spacingAndGlyphs">18.0%</text>
<text class="g" x="1503" y="292" textLength="39" lengthAdjust="spacingAndGlyphs">12.0%</text>
<text class="g" x="1503" y="340" textLength="31" lengthAdjust="spacingAndGlyphs">9.0%</text>
<text class="g" x="1503" y="387" textLength="31" lengthAdjust="spacingAndGlyphs">6.0%</text>
<text class="g" x="1503" y="435" textLength="31" lengthAdjust="spacingAndGlyphs">3.0%</text>
<text class="g" x="1504" y="482" textLength="31" lengthAdjust="spacingAndGlyphs">0.0%</text>
<text class="g" x="1503" y="529" textLength="41" lengthAdjust="spacingAndGlyphs">-3.0%</text>
<rect x="1499" y="217" width="73" height="16" fill="#e81d0c"/>
<text x="1503" y="230" class="w" textLength="36" lengthAdjust="spacingAndGlyphs">5,400</text>
<text x="1504" y="245" class="r" textLength="46" lengthAdjust="spacingAndGlyphs">16.00%</text>
<rect x="1557" y="562" width="10" height="9" fill="#4a4a4a"/><path d="M1559.500 564.500l5 4M1564.500 564.500l-5 4" stroke="#ddd"/>
<text x="1500" y="588" class="g" textLength="42" lengthAdjust="spacingAndGlyphs">1,000K</text>
<rect x="1495" y="588" width="72" height="16" fill="#1559c8"/>
<text x="1500" y="601" class="w" textLength="48" lengthAdjust="spacingAndGlyphs">357,830</text>
<text x="1500" y="616" style="fill:#2f78d8" textLength="44" lengthAdjust="spacingAndGlyphs">70.19%</text>
<text x="794" y="636" class="h g" textLength="42" lengthAdjust="spacingAndGlyphs">03/26</text>
<text class="g" x="928" y="636" textLength="14" lengthAdjust="spacingAndGlyphs">10</text>
<text class="g" x="1025" y="636" textLength="13" lengthAdjust="spacingAndGlyphs">11</text>
<text class="g" x="1126" y="636" textLength="14" lengthAdjust="spacingAndGlyphs">12</text>
<text class="g" x="1222" y="636" textLength="14" lengthAdjust="spacingAndGlyphs">13</text>
<text class="g" x="1318" y="636" textLength="14" lengthAdjust="spacingAndGlyphs">14</text>
<text class="g" x="1415" y="636" textLength="14" lengthAdjust="spacingAndGlyphs">15</text>
<text class="g" x="1500" y="636" textLength="53" lengthAdjust="spacingAndGlyphs">15:30:00</text>

<!-- right scrollbar -->
<rect x="792" y="644" width="778" height="22" fill="#f3f3f3"/>
<rect x="811" y="645" width="384" height="20" fill="#f8f8f8"/>
<rect x="1195" y="645" width="66" height="20" fill="#efefef"/><path d="M1195 665.500h66" stroke="#999" stroke-width="1.500"/>
<rect x="792" y="645" width="19" height="20" fill="#f0f0f0" stroke="#999"/><path d="M803 650v10l-6-5z" fill="#111"/>
<rect x="1261" y="645" width="20" height="20" fill="#f0f0f0" stroke="#999"/><path d="M1269 650v10l6-5z" fill="#111"/>
<path d="M1288 651h85" stroke="#aaa" stroke-width="2"/><path d="M1305 646v12" stroke="#888" stroke-width="2"/>
<path d="M1291 663v3M1299 663v3M1307 663v3M1315 663v3M1323 663v3M1331 663v3M1339 663v3M1347 663v3M1355 663v3M1363 663v3M1372 663v3" stroke="#444"/>
<g transform="translate(781 0)">
<rect class="ic" x="603" y="648" width="11" height="12" rx="1"/><rect x="610" y="655" width="8" height="8" fill="#eee" stroke="#666"/><path d="M614 655v8M610 659h8" stroke="#666"/>
<circle cx="630.500" cy="655" r="5.500" fill="none" stroke="#666" stroke-width="1.500" stroke-dasharray="2 1"/><circle cx="630.500" cy="655" r="3" class="ic"/><circle cx="630.500" cy="655" r="7" fill="none" stroke="#777" stroke-dasharray="2 2"/>
<path d="M645 656l4-6 4 3 5-5M645 650l4 2 4 4 6-3" fill="none" stroke="#999"/><circle cx="647" cy="660" r="3" fill="#fff" stroke="#222" stroke-width="2"/>
<path d="M666 661l7-11 3 6 3-3 2 2M670 661l3-8" fill="none" stroke="#888" stroke-width="1.300"/>
<path d="M688 653l4-4h8v8l-4 4h-8zM688 653h8v8M696 653l4-4" fill="none" stroke="#888"/><path d="M698 657v6M700.500 655v8M703 657v6" stroke="#333" stroke-width="1.300"/>
<circle cx="714" cy="652" r="5" fill="none" stroke="#666" stroke-width="1.500"/><path d="M717.500 656l5 5" stroke="#666" stroke-width="2"/>
<path d="M730 656h11" stroke="#666" stroke-width="2.500"/>
<path d="M751 656h12M757 650v12" stroke="#555" stroke-width="2.500"/>
</g>
<text x="1554" y="662" class="h g" style="font-size:17px" textLength="12" lengthAdjust="spacingAndGlyphs">A</text>
</svg>
</body></html>
